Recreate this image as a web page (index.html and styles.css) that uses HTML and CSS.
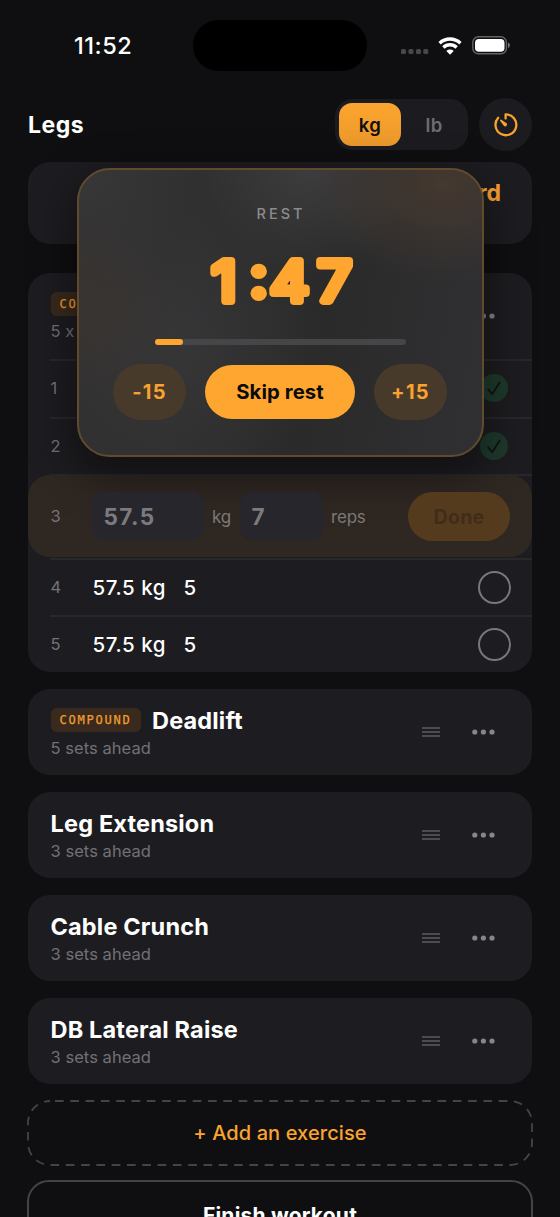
FILE: index.html
```html
<!DOCTYPE html>
<html lang="en">
<head>
<meta charset="utf-8">
<title>Legs workout</title>
<link rel="stylesheet" href="styles.css">
</head>
<body>
<svg class="defs" width="0" height="0">
  <symbol id="grip" viewBox="0 0 18 12"><path d="M0 2h18M0 6h18M0 10h18" stroke="#4c4c50" stroke-width="2"/></symbol>
  <symbol id="dots" viewBox="0 0 24 6"><g fill="#85858a"><circle cx="2.8" cy="3" r="2.6"/><circle cx="11.4" cy="3" r="2.6"/><circle cx="20" cy="3" r="2.6"/></g></symbol>
  <symbol id="check" viewBox="0 0 28 28"><circle cx="14" cy="14" r="14" fill="#1f3a2c"/><path d="M8.2 15.4l4 4.8L19.6 8.6" fill="none" stroke="#101613" stroke-width="1.9" stroke-linecap="round" stroke-linejoin="round"/></symbol>
</svg>
<div class="phone">
  <div class="status">
    <span class="clock">11:52</span>
    <span class="island"></span>
    <span class="signals">
      <svg width="28" height="6" viewBox="0 0 28 6" class="cell"><g fill="#48484b"><rect x="0" y="0" width="5" height="5" rx="1.5"/><rect x="7.5" y="0" width="5" height="5" rx="1.5"/><rect x="15" y="0" width="5" height="5" rx="1.5"/><rect x="22.3" y="0" width="5" height="5" rx="1.5"/></g></svg>
      <svg width="24" height="18" viewBox="0 0 24 18" class="wifi"><g fill="none" stroke="#fff" stroke-width="3.4"><path d="M1.6 6.2a15 15 0 0 1 20.8 0"/><path d="M5.4 10.5a9.3 9.3 0 0 1 13.2 0"/></g><path d="M8.3 13.9a5.4 5.4 0 0 1 7.4 0L12 17.7z" fill="#fff"/></svg>
      <svg width="39" height="19" viewBox="0 0 39 19" class="battery"><rect x=".8" y=".8" width="33.6" height="17" rx="5.5" fill="none" stroke="#636365" stroke-width="1.4"/><rect x="3" y="3" width="29.5" height="12.8" rx="3.8" fill="#fff"/><path d="M36 6.6c2.6.8 2.6 4.6 0 5.5z" fill="#737375"/></svg>
    </span>
  </div>

  <header class="topbar">
    <h1>Legs</h1>
    <div class="units"><span class="unit on">kg</span><span class="unit">lb</span></div>
    <div class="timer-btn">
      <svg width="24" height="24" viewBox="0 0 24 24" fill="none" stroke="#f9a22d" stroke-width="2.3" stroke-linecap="round" stroke-linejoin="round"><path d="M4.2 4.8A10.4 10.4 0 1 0 11.6 1.4v4.2"/><path d="M6.9 7.5l5.2 3.4a1.2 1.2 0 0 1-1.4 1.6z" fill="#f9a22d" stroke-width="1.8"/></svg>
    </div>
  </header>

  <section class="card banner"><strong>rd</strong></section>

  <section class="card active">
    <div class="exercise-head">
      <div><span class="tag">COMPOUND</span><p>5 x 5</p></div>
      <svg class="more" width="24" height="6"><use href="#dots"/></svg>
    </div>
    <div class="set done"><span class="num">1</span><svg width="28" height="28"><use href="#check"/></svg></div>
    <div class="set done second"><span class="num">2</span><span class="load">57.5 kg</span><svg width="28" height="28"><use href="#check"/></svg></div>
    <div class="set current"><span class="num">3</span><span class="field wide">57.5</span><span class="lbl kg">kg</span><span class="field">7</span><span class="lbl">reps</span><span class="done-btn">Done</span></div>
    <div class="set next"><span class="num">4</span><span class="load">57.5 kg</span><span class="reps">5</span><i class="ring"></i></div>
    <div class="set"><span class="num">5</span><span class="load">57.5 kg</span><span class="reps">5</span><i class="ring"></i></div>
  </section>

  <section class="card item"><div class="info"><h2><span class="tag">COMPOUND</span>Deadlift</h2><p>5 sets ahead</p></div><svg class="grip" width="18" height="12"><use href="#grip"/></svg><svg width="24" height="6"><use href="#dots"/></svg></section>
  <section class="card item"><div class="info"><h2>Leg Extension</h2><p>3 sets ahead</p></div><svg class="grip" width="18" height="12"><use href="#grip"/></svg><svg width="24" height="6"><use href="#dots"/></svg></section>
  <section class="card item"><div class="info"><h2>Cable Crunch</h2><p>3 sets ahead</p></div><svg class="grip" width="18" height="12"><use href="#grip"/></svg><svg width="24" height="6"><use href="#dots"/></svg></section>
  <section class="card item"><div class="info"><h2>DB Lateral Raise</h2><p>3 sets ahead</p></div><svg class="grip" width="18" height="12"><use href="#grip"/></svg><svg width="24" height="6"><use href="#dots"/></svg></section>

  <div class="add"><svg class="dash" width="506" height="66"><rect x="1" y="1" width="504" height="64" rx="22" fill="none" stroke="#444447" stroke-width="1.8" stroke-dasharray="8.7 6.6" stroke-dashoffset="-5"/></svg>+ Add an exercise</div>
  <div class="finish">Finish workout</div>

  <div class="rest">
    <div class="rest-label">REST</div>
    <svg class="count" width="160" height="60" viewBox="0 0 160 60"><text transform="scale(1.09 1)" y="49.8 46 49.8 49.8" x="9.9 45 63.2 106.8">1:47</text></svg>
    <div class="track"><div class="fill"></div></div>
    <div class="actions"><span class="adj">-15</span><span class="skip">Skip rest</span><span class="adj">+15</span></div>
  </div>
</div>
</body>
</html>
```

FILE: styles.css
```css
* { box-sizing: border-box; }
html, body { margin: 0; height: 1217px; overflow: hidden; background: #0f0f11; }
body { font-family: Inter, "Liberation Sans", sans-serif; color: #fff; }
h1, h2, p { margin: 0; }
.defs { display: block; }
svg { display: block; flex: none; }
.phone { position: relative; width: 560px; height: 1217px; overflow: hidden; display: flex; flex-direction: column; padding: 0 28px; }
.status { height: 97px; flex: none; display: flex; padding-top: 20px; align-items: flex-start; }
.clock { width: 165px; padding-left: 46px; font-size: 23.5px; font-weight: 550; line-height: 52px; letter-spacing: .5px; }
.island { width: 174px; height: 51px; border-radius: 26px; background: #000; }
.signals { display: flex; align-items: center; height: 51px; margin-left: 34px; }
.cell { margin-top: 13px; }
.wifi { margin-left: 9px; }
.battery { margin-left: 10px; }

.topbar { height: 55px; flex: none; display: flex; align-items: center; margin-bottom: 10px; }
h1 { flex: 1; font-size: 23px; font-weight: 750; letter-spacing: .5px; padding-top: 1px; }
.units { display: flex; width: 133px; height: 51px; padding: 4px; border-radius: 18px; background: #1c1c20; }
.unit { flex: none; width: 62px; display: flex; align-items: center; justify-content: center; font-size: 18.5px; font-weight: 600; color: #6c6c71; border-radius: 13px; letter-spacing: .3px; }
.unit.on { color: #0f0f11; background: linear-gradient(#fda52f, #eb992b); }
.unit + .unit { margin-left: 2px; }
.timer-btn { width: 53px; height: 53px; margin-left: 11px; border-radius: 50%; background: #1c1c20; display: flex; align-items: center; justify-content: center; }

.card { flex: none; background: #1d1d21; border-radius: 22px; }
.banner { height: 82px; margin-bottom: 28.5px; padding: 17px 31px; text-align: right; color: #fca42f; font-size: 23px; line-height: 28px; }
.active { height: 399.5px; margin-bottom: 17px; overflow: hidden; }
.exercise-head { height: 86.5px; padding: 19px 36px 0 22.5px; display: flex; justify-content: space-between; }
.exercise-head p { margin-top: 4.5px; }
.more { margin-top: 21px; }
.card p { font-size: 16.5px; line-height: 22px; letter-spacing: .05px; color: #717175; }
.tag { display: inline-block; width: 90px; height: 24px; border-radius: 6px; background: #392a1d; color: #f19d2d; text-align: center; font: 12.1px/24px "DejaVu Sans Mono", monospace; letter-spacing: 1.75px; text-indent: 0; -webkit-text-stroke: .25px #f19d2d; }

.set { position: relative; height: 57px; display: flex; align-items: center; padding: 1px 21px 0 22.5px; font-size: 20.5px; font-weight: 500; }
.set::before { content: ""; position: absolute; left: 22px; right: 0; top: 0; height: 1.5px; background: #28282c; }
.set.done { height: 58px; padding-right: 24.5px; padding-top: 0; }
.set.done svg { margin-left: auto; }
.set.done.second { height: 57px; }
.set.done .load { line-height: 20px; margin-top: -3px; }
.num { width: 42px; font-size: 16.5px; font-weight: 400; color: #737377; }
.load { width: 91px; letter-spacing: .55px; }
.reps { flex: 1; }
.ring { width: 33px; height: 33px; border: 2px solid #77777c; border-radius: 50%; }
.set.current { height: 84px; padding: 0 22px; }
.set.current .num { padding-left: .5px; }
.set.current::after { content: ""; position: absolute; left: 0; right: 0; top: 1px; height: 82px; border-radius: 22px; background: #2f2722; z-index: 0; }
.set.current > * { position: relative; z-index: 1; }
.field { width: 83px; height: 48px; border-radius: 12px; background: #27262c; color: #7b7b7e; font-size: 22.5px; font-weight: 750; line-height: 50px; padding-left: 11.5px; letter-spacing: 1.4px; }
.field.wide { width: 112px; }
.lbl { font-size: 17px; font-weight: 400; color: #7b7977; margin-left: 8px; letter-spacing: -.2px; padding-top: 1px; }
.lbl.kg { width: 28px; }
.done-btn { width: 102px; height: 49px; margin-left: auto; border-radius: 25px; background: #553b1e; color: #402d18; font-size: 19.5px; font-weight: 700; line-height: 50px; text-align: center; letter-spacing: .3px; }

.item { height: 86px; margin-bottom: 17px; display: flex; align-items: center; padding: 0 36px 0 22.5px; }
.info { flex: 1; }
h2 { display: flex; align-items: center; height: 28px; font-size: 23.5px; font-weight: 750; letter-spacing: .17px; margin-top: 1px; }
h2 .tag { margin-right: 11.5px; }
.item p { margin-top: 3px; }
.grip { margin-right: 32px; }

.add { position: relative; flex: none; width: 506px; height: 66px; margin: -1px 0 14px -1px; text-align: center; line-height: 66px; font-size: 20px; font-weight: 550; color: #fba42f; letter-spacing: .1px; }
.dash { position: absolute; inset: 0; }
.finish { flex: none; width: 506px; height: 66px; margin-left: -1px; border: 2px solid #444447; border-radius: 22px; text-align: center; font-size: 21px; font-weight: 700; line-height: 68px; letter-spacing: .2px; }

.rest {
  position: absolute; left: 77px; top: 167.5px; width: 407px; height: 289px; border-radius: 33px;
  border: 2px solid #614b2d;
  background:
    radial-gradient(ellipse at 90% 5%, rgba(84,64,48,.6), transparent 130px),
    radial-gradient(circle at 57% 0, rgba(72,72,74,.6), transparent 105px),
    radial-gradient(circle at 0 48%, rgba(64,54,46,.5), transparent 105px),
    radial-gradient(circle at 25% 62%, rgba(58,58,60,.55), transparent 150px),
    radial-gradient(circle at 0 0, #373738, transparent 120px),
    linear-gradient(100deg, #303031 30%, #2a2a2b 58%, #303032);
  box-shadow: 0 16px 42px 8px rgba(0,0,0,.38);
  display: flex; flex-direction: column; align-items: center;
}
.rest-label { margin-top: 33px; font-size: 14.5px; font-weight: 500; line-height: 22px; letter-spacing: 3px; padding-left: 1px; color: #8b8b8c; }
.count { margin-top: 26px; }
.count text { font-family: Inter, sans-serif; font-size: 55.5px; font-weight: 400; fill: #ffa630; stroke: #ffa630; stroke-width: 7.8; stroke-linejoin: round; stroke-linecap: round; }
.track { width: 251px; height: 6px; margin-top: 28px; border-radius: 3px; background: #464648; }
.fill { width: 28px; height: 6px; border-radius: 3px; background: #ffa630; }
.actions { display: flex; align-items: center; gap: 19px; margin: 19px 1px 0 0; }
.adj { width: 73px; height: 56px; border-radius: 28px; background: #483a2b; color: #f9a22f; font-size: 20px; font-weight: 650; line-height: 57px; text-align: center; letter-spacing: 1.3px; }
.skip { width: 150px; height: 54px; border-radius: 27px; background: #ffa630; color: #0b0b0c; font-size: 20.3px; font-weight: 650; line-height: 54px; text-align: center; letter-spacing: .1px; }
```
